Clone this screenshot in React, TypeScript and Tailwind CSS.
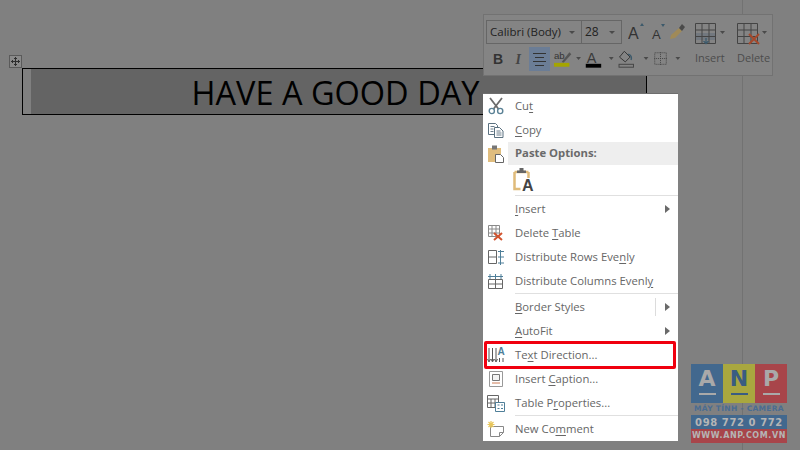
import type { ReactNode } from "react";

const font = { ui: "font-['Open_Sans',sans-serif]" };

function Scissors() {
  return (
    <svg width="16" height="18" viewBox="0 0 16 18" fill="none">
      <path d="M2 1l8.500 11M14 1L5.500 12" stroke="#6b6b6b" strokeWidth="1.800" />
      <circle cx="3.800" cy="14" r="2.600" stroke="#5b8296" strokeWidth="1.400" />
      <circle cx="12.200" cy="14" r="2.600" stroke="#5b8296" strokeWidth="1.400" />
    </svg>
  );
}

function CopyIcon() {
  return (
    <svg width="16" height="15" viewBox="0 0 16 15" fill="#fff" stroke="#5b7180" strokeWidth="1">
      <path d="M.5.5h7l2 2v9H.5z" />
      <path d="M6.500 4.500h5l3.500 3.500v6.500H6.500z" />
      <path d="M2.500 3.500h4M2.500 6h3M2.500 8.500h3M8.500 8h4M8.500 10h5M8.500 12h5" strokeWidth=".9" />
    </svg>
  );
}

function PasteIcon() {
  return (
    <svg width="16" height="18" viewBox="0 0 16 18">
      <rect x="0" y="3" width="13" height="14" fill="#e0bd7e" />
      <rect x="4" y="0.500" width="5" height="4" fill="#777" />
      <path d="M7.500 9.500h5l3 3v5h-8z" fill="#fff" stroke="#666" />
    </svg>
  );
}

function PasteTextIcon() {
  return (
    <svg width="24" height="30" viewBox="0 0 24 30">
      <path d="M1.500 7v17h6M15.500 7v6M1.500 7H15.500" fill="none" stroke="#dfbb7a" strokeWidth="2.500" />
      <path d="M4 8V5.500h2.500V3h4v2.500H13V8z" fill="#666" />
      <text x="9" y="26" fontSize="16" fontFamily="Liberation Sans" fill="#444" fontWeight="700">A</text>
    </svg>
  );
}

function DeleteTableIcon() {
  return (
    <svg width="16" height="16" viewBox="0 0 16 16" fill="none">
      <path d="M.5.5h11v11H.5zM4 .5v11M8 .5v11M.5 4h11M.5 8h11" stroke="#8a8a8a" />
      <path d="M6 8l8 7M14 8l-8 7" stroke="#d2532e" strokeWidth="2" />
    </svg>
  );
}

function DistRowsIcon() {
  return (
    <svg width="16" height="15" viewBox="0 0 16 15" fill="none">
      <path d="M.5.500h8v13h-8zM.5 7h8" stroke="#666" />
      <path d="M12.500 0v15M10 1.500h6M10 7h6M10 13h6" stroke="#4f7f99" />
    </svg>
  );
}

function DistColsIcon() {
  return (
    <svg width="16" height="15" viewBox="0 0 16 15" fill="none">
      <path d="M.5 5.500h14v9H.5zM7.500 5.500v9M.5 10h14" stroke="#666" />
      <path d="M0 2.500h15M2 0v5M7.500 0v5M13 0v5" stroke="#4f7f99" />
    </svg>
  );
}

function TextDirIcon() {
  return (
    <svg width="18" height="18" viewBox="0 0 18 18" fill="none">
      <path d="M2 2v13M5.500 2v13M9 2v13" stroke="#555" />
      <path d="M.5 13L2 16l1.500-3M4 13l1.500 3L7 13M7.500 13L9 16l1.500-3" stroke="#555" />
      <path d="M12.500 16v-4M16 16v-4" stroke="#555" />
      <text x="10.500" y="9" fontSize="10" fontWeight="700" fontFamily="Liberation Sans" fill="#4f7f99">A</text>
    </svg>
  );
}

function CaptionIcon() {
  return (
    <svg width="14" height="16" viewBox="0 0 14 16" fill="none">
      <path d="M.5.5h13v15H.5z" stroke="#999" />
      <path d="M3.500 3.500h7v6h-7z" stroke="#777" fill="#f3f3f3" />
      <path d="M3 12h8" stroke="#cc7b55" />
    </svg>
  );
}

function PropsIcon() {
  return (
    <svg width="18" height="17" viewBox="0 0 18 17" fill="none">
      <path d="M.5.5h11v12H.5zM.5 4h11M4 4v8M8 4v8M.5 8h11" stroke="#666" />
      <path d="M8.500 7.500h9v9h-9z" fill="#fff" stroke="#4f7f99" />
      <path d="M10.500 10h2M14 10h2M10.500 13.500h2M14 13.500h2" stroke="#4f7f99" />
    </svg>
  );
}

function CommentIcon() {
  return (
    <svg width="17" height="17" viewBox="0 0 17 17" fill="none">
      <path d="M3.500 5.500h13v6l-4 4h-9z" fill="#fff" stroke="#888" />
      <path d="M12.500 15.500v-4h4" stroke="#888" />
      <path d="M4 0v7M.5 3.500h7M1.500 1l5 5M6.500 1l-5 5" stroke="#e8c65a" strokeWidth="1.200" />
    </svg>
  );
}

function Key({ children }: { children: ReactNode }) {
  return <span className="underline underline-offset-2">{children}</span>;
}

function Arrow() {
  return <span className="absolute right-[8px] top-1/2 -mt-[4px] border-y-[4px] border-l-[5px] border-y-transparent border-l-[#6a6a6a]" />;
}

function Row({ icon, children, arrow, divider }: { icon?: ReactNode; children: ReactNode; arrow?: boolean; divider?: boolean }) {
  return (
    <div className="relative flex h-6 items-center">
      <div className="flex w-[25px] justify-center">{icon}</div>
      <div className="pl-[7px]">{children}</div>
      {divider && <span className="absolute right-[22px] top-[3px] h-[18px] w-px bg-[#dcdcdc]" />}
      {arrow && <Arrow />}
    </div>
  );
}

function Sep() {
  return <div className="ml-[32px] h-[2px] border-t border-[#e0e0e0]" />;
}

function ContextMenu() {
  return (
    <div className={`absolute left-[483px] top-[93px] h-[348px] w-[195px] border-t border-[#6e6e6e] bg-white text-[11.3px] text-[#666666] ${font.ui}`}>
      <Row icon={<Scissors />}>Cu<Key>t</Key></Row>
      <Row icon={<CopyIcon />}><Key>C</Key>opy</Row>
      <div className="relative flex h-[23px] items-center">
        <div className="flex w-[25px] justify-center"><PasteIcon /></div>
        <div className="flex h-full flex-1 items-center bg-[#eeeeee] pl-[7px] font-bold text-[#6a6a6a]">Paste Options:</div>
      </div>
      <div className="flex h-[30px] items-center pl-[30px]"><PasteTextIcon /></div>
      <Sep />
      <Row arrow><Key>I</Key>nsert</Row>
      <Row icon={<DeleteTableIcon />}>Delete <Key>T</Key>able</Row>
      <Row icon={<DistRowsIcon />}>Distribute Rows Eve<Key>n</Key>ly</Row>
      <Row icon={<DistColsIcon />}>Distribute Columns Evenl<Key>y</Key></Row>
      <Sep />
      <Row arrow divider><Key>B</Key>order Styles</Row>
      <Row arrow><Key>A</Key>utoFit</Row>
      <Row icon={<TextDirIcon />}>Te<Key>x</Key>t Direction...</Row>
      <Row icon={<CaptionIcon />}>Insert <Key>C</Key>aption...</Row>
      <Row icon={<PropsIcon />}>Table P<Key>r</Key>operties...</Row>
      <Sep />
      <Row icon={<CommentIcon />}>New Co<Key>m</Key>ment</Row>
      <div className="absolute left-px top-[247px] h-[28px] w-[192px] rounded-[2px] border-[3px] border-[#f0000f]" />
    </div>
  );
}

function Caret() {
  return <span className="border-x-[3px] border-t-[3px] border-x-transparent border-t-[#4a4a4a]" />;
}

function MiniToolbar() {
  return (
    <div className={`absolute left-[483px] top-[14px] flex h-[62px] w-[290px] border border-[#727272] bg-[#848484] text-[#3a3a3a] ${font.ui}`}>
      <div className="flex w-[204px] flex-col gap-[3px] pl-[2px] pt-[5px]">
        <div className="flex h-6 items-center">
          <div className="flex h-6 w-[96px] items-center justify-between border border-[#666] pl-[3px] pr-[6px] text-[11.5px] text-[#222]">
            Calibri (Body)<Caret />
          </div>
          <div className="flex h-6 w-[40px] items-center justify-between border border-l-0 border-[#666] pl-[3px] pr-[6px] text-[12px] text-[#222]">
            28<Caret />
          </div>
          <svg className="ml-[6px]" width="60" height="22" viewBox="0 0 60 22">
            <text x="0" y="18" fontSize="16" fontFamily="Liberation Sans" fill="#333">A</text>
            <path d="M12 5l2-3 2 3z" fill="#3d5a6b" />
            <text x="24" y="18" fontSize="13" fontFamily="Liberation Sans" fill="#333">A</text>
            <path d="M33 3l2 3 2-3z" fill="#3d5a6b" />
            <path d="M43 14l8-7 3 3-7 7-5 1z" fill="#a08a58" />
            <path d="M51 7l3-4 3 3-3 4z" fill="#4a4a4a" />
          </svg>
        </div>
        <div className="flex h-6 items-center text-[14px]">
          <span className="w-[24px] pl-[7px] font-['Liberation_Sans',sans-serif] font-bold text-[#333]">B</span>
          <span className="w-[20px] pl-[6px] font-['Liberation_Serif',serif] font-bold italic text-[#444]">I</span>
          <span className="flex h-6 w-[22px] flex-col items-center justify-center gap-[3px] bg-[#6b7d96]">
            <i className="h-px w-[13px] bg-[#333]" /><i className="h-px w-[9px] bg-[#333]" /><i className="h-px w-[13px] bg-[#333]" /><i className="h-px w-[9px] bg-[#333]" />
          </span>
          <svg className="ml-[3px]" width="84" height="22" viewBox="0 0 84 22">
            <text x="1" y="11" fontSize="10" fontFamily="Liberation Sans" fill="#333">ab</text>
            <path d="M9 14l8-10 2 2-8 9z" fill="#555" />
            <rect x="1" y="15" width="16" height="4" fill="#a5a500" />
            <path d="M24 9h5l-2.500 3z" fill="#4a4a4a" />
            <text x="35" y="15" fontSize="15" fontFamily="Liberation Sans" fill="#3a3a3a">A</text>
            <rect x="34" y="16" width="16" height="4" fill="#000" />
            <path d="M58 9h5l-2.500 3z" fill="#4a4a4a" />
            <path d="M74 3l6 6-5 5-6-5z" fill="none" stroke="#333" />
            <path d="M78 6c3 1 4 3 3 6" fill="none" stroke="#3d5a6b" strokeWidth="1.500" />
            <rect x="68.500" y="16.500" width="15" height="3" fill="none" stroke="#444" />
          </svg>
          <svg width="56" height="22" viewBox="0 0 56 22">
            <path d="M10 9h5l-2.500 3z" fill="#4a4a4a" />
            <path d="M21.500 4.500h12v12h-12z" fill="none" stroke="#444" strokeDasharray="1 1" />
            <path d="M27.500 4v13M21 10.500h13" stroke="#444" strokeDasharray="1 1" />
            <path d="M43 9h5l-2.500 3z" fill="#4a4a4a" />
          </svg>
        </div>
      </div>
      <div className="my-[3px] w-px bg-[#767676]" />
      <div className="flex gap-[8px] pl-[7px] pt-[7px] text-[11px] text-[#4c4c4c]">
        <div className="flex w-[34px] flex-col">
          <svg width="32" height="24" viewBox="0 0 32 24" fill="none">
            <rect x="0" y="11" width="21" height="7" fill="#72787f" />
            <path d="M.5 1.500h20v20H.5zM7 1.500v20M14 1.500v20M.5 8h20M.5 14.500h20" stroke="#444" />
            <path d="M11 16v5M8.500 19l2.500 2.500 2.500-2.500" stroke="#3d5a6b" strokeWidth="1.300" />
            <path d="M25 9h5l-2.500 3z" fill="#4a4a4a" />
          </svg>
          <span className="mt-[4px] leading-[16px]">Insert</span>
        </div>
        <div className="flex w-[36px] flex-col">
          <svg width="32" height="24" viewBox="0 0 32 24" fill="none">
            <path d="M.5 1.500h20v20H.5zM7 1.500v20M14 1.500v20M.5 8h20M.5 14.500h20" stroke="#444" />
            <path d="M12 12l10 10M22 12L12 22" stroke="#a5492c" strokeWidth="2" />
            <path d="M25 9h5l-2.500 3z" fill="#4a4a4a" />
          </svg>
          <span className="mt-[4px] leading-[16px]">Delete</span>
        </div>
      </div>
    </div>
  );
}

function Logo() {
  return (
    <div className="absolute left-[691px] top-[364px] w-[96px] font-['DejaVu_Sans',sans-serif] font-bold">
      <div className="flex h-[39px] text-[22px] text-[#a9a9a9]">
        <div className="flex flex-1 flex-col items-center bg-[#42688e] leading-[30px]">A<i className="-mt-[1px] h-[2px] w-[17px] bg-[#a9a9a9]" /></div>
        <div className="flex flex-1 flex-col items-center bg-[#a9a73f] leading-[30px] text-[#3a5c82]">N<i className="-mt-[1px] h-[2px] w-[17px] bg-[#3a5c82]" /></div>
        <div className="flex flex-1 flex-col items-center bg-[#a8454a] leading-[30px]">P<i className="-mt-[1px] h-[2px] w-[17px] bg-[#a9a9a9]" /></div>
      </div>
      <div className="h-[10px] whitespace-nowrap pt-[1px] text-center text-[7.5px] leading-[9px] tracking-[0.3px] text-[#4a6c92]">MÁY TÍNH - CAMERA</div>
      <div className="mt-[2px] flex h-[14px] items-center justify-center whitespace-nowrap bg-[#42688e] text-[10px] tracking-[0.6px] text-[#b5b5b5]">098 772 0 772</div>
      <div className="flex h-[14px] items-center justify-center whitespace-nowrap bg-[#a8454a] text-[8px] tracking-[0.6px] text-[#b5b5b5]">WWW.ANP.COM.VN</div>
    </div>
  );
}

export default function App() {
  return (
    <div className="relative h-[450px] w-[800px] overflow-hidden bg-[#808080]">
      <div className="absolute bottom-0 left-[742px] top-0 w-px bg-[#727272]" />
      <div className="pl-[22px] pt-[68px]">
        <div className="flex h-[47px] w-[625px] border border-black bg-[#808080]">
          <div className="ml-[8px] flex flex-1 items-center justify-center bg-[#646464] pr-[6px] pt-[3px] font-['Open_Sans',sans-serif] text-[32.5px] text-black">
            HAVE A GOOD DAY
          </div>
        </div>
      </div>
      <div className="absolute left-[9px] top-[55px] flex h-[13px] w-[13px] items-center justify-center border border-[#5a5a5a] bg-[#8a8a8a]">
        <svg width="9" height="9" viewBox="0 0 9 9" fill="none" stroke="#2f2f2f">
          <path d="M4.500 0v9M0 4.500h9" />
          <path d="M3 1.500h3M3 7.500h3M1.500 3v3M7.500 3v3" />
        </svg>
      </div>
      <MiniToolbar />
      <ContextMenu />
      <Logo />
    </div>
  );
}
